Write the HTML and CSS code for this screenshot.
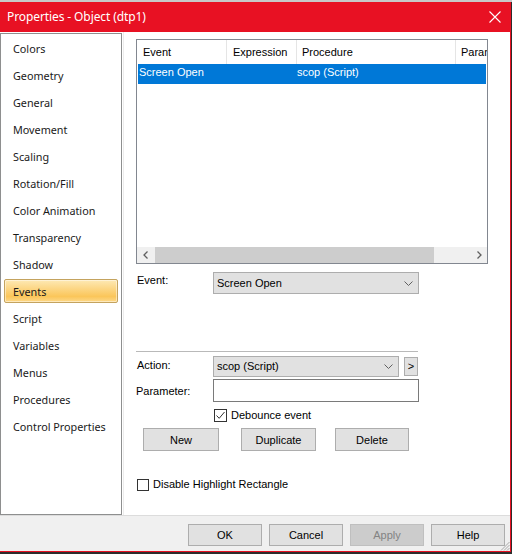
FILE: index.html
```html
<!DOCTYPE html>
<html>
<head>
<meta charset="utf-8">
<link rel="stylesheet" href="styles.css">
</head>
<body>
<div class="screen">
  <div class="topstrip"></div>
  <div class="window">
    <div class="titlebar">
      <span class="title">Properties - Object (dtp1)</span>
      <svg class="close" width="12" height="12" viewBox="0 0 12 12"><path d="M0.5 0.5 L11.5 11.5 M11.5 0.5 L0.5 11.5" stroke="#fff" stroke-width="1.1" fill="none"/></svg>
    </div>
    <div class="body">
      <div class="content">
        <div class="nav">
          <div class="nav-item">Colors</div>
          <div class="nav-item">Geometry</div>
          <div class="nav-item">General</div>
          <div class="nav-item">Movement</div>
          <div class="nav-item">Scaling</div>
          <div class="nav-item">Rotation/Fill</div>
          <div class="nav-item">Color Animation</div>
          <div class="nav-item">Transparency</div>
          <div class="nav-item">Shadow</div>
          <div class="nav-item selected">Events</div>
          <div class="nav-item">Script</div>
          <div class="nav-item">Variables</div>
          <div class="nav-item">Menus</div>
          <div class="nav-item">Procedures</div>
          <div class="nav-item">Control Properties</div>
        </div>
        <div class="main">
          <div class="listview">
            <div class="lv-header">
              <div class="lv-col c1">Event</div>
              <div class="lv-col c2">Expression</div>
              <div class="lv-col c3">Procedure</div>
              <div class="lv-col c4">Parameter</div>
            </div>
            <div class="lv-row">
              <div class="lv-cell r1">Screen Open</div>
              <div class="lv-cell r2"></div>
              <div class="lv-cell r3">scop (Script)</div>
            </div>
            <div class="lv-fill"></div>
            <div class="hscroll">
              <div class="sb-arrow">
                <svg width="6" height="8" viewBox="0 0 6 8"><path d="M4.5 0.5 L1 4 L4.5 7.5" stroke="#606060" stroke-width="1.3" fill="none"/></svg>
              </div>
              <div class="sb-thumb"></div>
              <div class="sb-track"></div>
              <div class="sb-arrow">
                <svg width="6" height="8" viewBox="0 0 6 8"><path d="M1.5 0.5 L5 4 L1.5 7.5" stroke="#606060" stroke-width="1.3" fill="none"/></svg>
              </div>
            </div>
          </div>

          <div class="row event-row">
            <div class="label">Event:</div>
            <div class="combo wide">
              <span>Screen Open</span>
              <svg class="chev" width="9" height="5" viewBox="0 0 9 5"><path d="M0.5 0.5 L4.5 4.5 L8.5 0.5" stroke="#606060" stroke-width="1" fill="none"/></svg>
            </div>
          </div>

          <div class="separator"></div>

          <div class="row action-row">
            <div class="label">Action:</div>
            <div class="combo action">
              <span>scop (Script)</span>
              <svg class="chev" width="9" height="5" viewBox="0 0 9 5"><path d="M0.5 0.5 L4.5 4.5 L8.5 0.5" stroke="#606060" stroke-width="1" fill="none"/></svg>
            </div>
            <div class="mini-btn">&gt;</div>
          </div>

          <div class="row param-row">
            <div class="label">Parameter:</div>
            <div class="textbox"></div>
          </div>

          <div class="check-row debounce">
            <div class="checkbox">
              <svg width="11" height="11" viewBox="0 0 11 11"><path d="M1.5 5.5 L4.2 8.3 L9.5 2" stroke="#333" stroke-width="1" fill="none"/></svg>
            </div>
            <span>Debounce event</span>
          </div>

          <div class="btn-row">
            <div class="btn b-new">New</div>
            <div class="btn b-dup">Duplicate</div>
            <div class="btn b-del">Delete</div>
          </div>

          <div class="check-row disable">
            <div class="checkbox"></div>
            <span>Disable Highlight Rectangle</span>
          </div>
        </div>
      </div>
      <div class="footer">
        <div class="btn fbtn">OK</div>
        <div class="btn fbtn">Cancel</div>
        <div class="btn fbtn disabled">Apply</div>
        <div class="btn fbtn">Help</div>
        <svg class="grip" width="10" height="10" viewBox="0 0 10 10">
          <path d="M9.5 1 L1 9.5 M9.5 4 L4 9.5 M9.5 7 L7 9.5" stroke="#a8a8a8" stroke-width="1" fill="none"/>
        </svg>
      </div>
    </div>
  </div>
</div>
</body>
</html>
```
FILE: styles.css
```css
* { box-sizing: border-box; }
html, body { margin: 0; padding: 0; }
body {
  width: 512px;
  height: 554px;
  overflow: hidden;
  background: #2d2d2d;
  font-family: "Liberation Sans", Arial, sans-serif;
  font-size: 11px;
  color: #000;
}
.screen { width: 512px; height: 554px; }
.topstrip { height: 2px; background: #c8c8c8; }
.window {
  width: 511px;
  height: 550px;
  border-right: 1px solid #e81123;
  border-bottom: 1px solid #e81123;
  display: flex;
  flex-direction: column;
  background: #fff;
}
.titlebar {
  height: 30px;
  background: #e81123;
  color: #fff;
  display: flex;
  align-items: center;
  padding-left: 7px;
  position: relative;
  flex: none;
}
.title {
  font-family: "Noto Sans", "Open Sans", sans-serif;
  font-size: 12px;
  letter-spacing: -0.1px;
  margin-top: -1px;
}
.close { position: absolute; left: 489px; top: 9px; }
.body { flex: 1; display: flex; flex-direction: column; }
.content { height: 483px; display: flex; flex: none; }
.nav {
  width: 122px;
  margin-top: 1px;
  height: 482px;
  border: 1px solid #8e8f8f;
  padding-top: 2px;
  font-family: "Noto Sans", "Open Sans", sans-serif;
  font-size: 10.8px;
  color: #1a1a1a;
}
.nav-item {
  height: 24px;
  line-height: 23px;
  margin: 0 3px 3px 3px;
  padding-left: 8px;
  padding-top: 0;
  border: 1px solid transparent;
  border-radius: 2px;
  white-space: nowrap;
}
.nav-item.selected {
  border-color: #c4a35e;
  background: linear-gradient(to bottom, #fde9b4 0%, #fcd684 40%, #fbc65a 75%, #fdd98a 100%);
  box-shadow: inset 0 0 0 1px rgba(255,255,255,0.45);
}
.main {
  flex: 1;
  border-left: 1px solid #ececec;
  margin-left: 1px;
  padding-left: 12px;
}
.listview {
  margin-top: 7px;
  width: 352px;
  height: 225px;
  border: 1px solid #828790;
  display: flex;
  flex-direction: column;
  overflow: hidden;
}
.lv-header {
  height: 24px;
  display: flex;
  flex: none;
  white-space: nowrap;
}
.lv-col {
  height: 24px;
  line-height: 25px;
  border-right: 1px solid #e5e5e5;
  overflow: hidden;
  flex: none;
}
.c1 { width: 90px; padding-left: 6px; }
.c2 { width: 70px; padding-left: 6px; }
.c3 { width: 159px; padding-left: 5px; }
.c4 { width: 60px; padding-left: 5px; border-right: none; }
.lv-row {
  height: 20px;
  line-height: 17px;
  margin: 0 1px;
  background: #0078d7;
  color: #fff;
  display: flex;
  flex: none;
  white-space: nowrap;
}
.lv-cell { flex: none; }
.r1 { width: 89px; padding-left: 1px; }
.r2 { width: 70px; }
.r3 { width: 180px; padding-left: 0; }
.lv-fill { flex: 1; }
.hscroll {
  height: 16px;
  flex: none;
  background: #f0f0f0;
  display: flex;
  align-items: stretch;
}
.sb-arrow {
  width: 17px;
  flex: none;
  display: flex;
  align-items: center;
  justify-content: center;
}
.sb-thumb { width: 279px; margin: 0 1px; background: #cdcdcd; flex: none; }
.sb-track { flex: 1; }
.row { display: flex; }
.label { width: 77px; padding-left: 1px; flex: none; }
.event-row { margin-top: 8px; height: 22px; }
.event-row .label { padding-top: 2px; }
.combo {
  height: 22px;
  background: #e1e1e1;
  border: 1px solid #adadad;
  display: flex;
  align-items: center;
  padding-left: 3px;
  position: relative;
}
.combo .chev { position: absolute; right: 5px; top: 8px; }
.combo.wide { width: 206px; }
.separator {
  margin-top: 57px;
  width: 282px;
  height: 1px;
  background: #b9b9b9;
}
.action-row { margin-top: 4px; height: 21px; align-items: flex-start; }
.action-row .label { line-height: 19px; padding-top: 0; }
.combo.action { width: 186px; height: 21px; }
.combo.action span { margin-top: -1px; }
.combo.action .chev { top: 7px; }
.mini-btn {
  margin-left: 5px;
  margin-top: 1px;
  width: 14px;
  height: 19px;
  background: #e1e1e1;
  border: 1px solid #adadad;
  text-align: center;
  line-height: 16px;
}
.param-row { margin-top: 2px; height: 23px; align-items: center; }
.param-row .label { padding-left: 0; padding-top: 1px; }
.textbox {
  width: 206px;
  height: 23px;
  background: #fff;
  border: 1px solid #7a7a7a;
}
.check-row { display: flex; align-items: center; white-space: nowrap; }
.checkbox {
  width: 13px;
  height: 13px;
  border: 1px solid #333;
  background: #fff;
  margin-right: 4px;
  display: flex;
  align-items: center;
  justify-content: center;
  flex: none;
}
.debounce { margin-top: 6px; margin-left: 78px; height: 14px; }
.btn-row { display: flex; margin-top: 6px; }
.btn {
  height: 23px;
  background: #e1e1e1;
  border: 1px solid #adadad;
  display: flex;
  align-items: center;
  justify-content: center;
  flex: none;
}
.b-new { width: 76px; margin-left: 7px; }
.b-dup { width: 75px; margin-left: 22px; }
.b-del { width: 74px; margin-left: 19px; }
.disable { margin-top: 27px; margin-left: 1px; height: 13px; }
.disable span { margin-top: -2px; }
.disable .checkbox { width: 12px; height: 12px; }
.footer {
  flex: 1;
  background: #f0f0f0;
  border-top: 1px solid #dcdcdc;
  display: flex;
  justify-content: flex-end;
  align-items: flex-start;
  padding-top: 8px;
  padding-right: 5px;
  gap: 7px;
  position: relative;
}
.fbtn { width: 74px; height: 22px; }
.fbtn.disabled { background: #cccccc; border-color: #bfbfbf; color: #838383; }
.grip { position: absolute; right: 0; bottom: 0; }
```
